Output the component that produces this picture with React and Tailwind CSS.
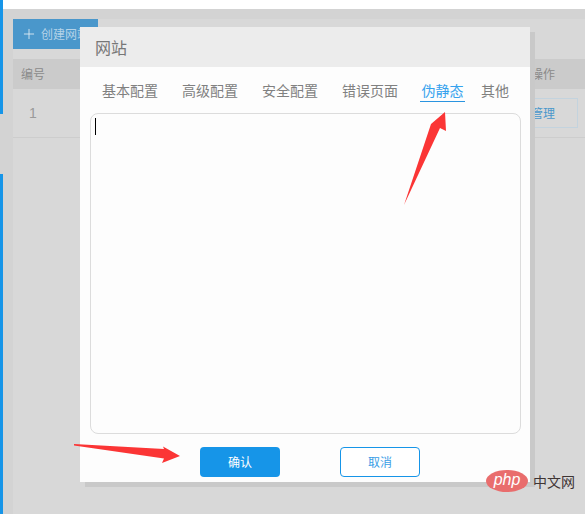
import React from 'react';
import { Plus } from 'lucide-react';

const font = "font-['Noto_Sans_CJK_SC','Liberation_Sans',sans-serif]";

const tabs = [
  { label: '基本配置', cls: 'ml-0' },
  { label: '高级配置', cls: 'ml-6' },
  { label: '安全配置', cls: 'ml-6' },
  { label: '错误页面', cls: 'ml-6' },
  { label: '伪静态', cls: 'ml-[22px] w-[45px] text-center text-[#35a2ee] border-b border-[#2a94e0]' },
  { label: '其他', cls: 'ml-4' },
];

const Arrows = () => (
  <svg className="absolute left-0 top-0 pointer-events-none" width="585" height="514" viewBox="0 0 585 514">
    <polygon points="404,205 429,130 431,124 445,112 446,131 440,128" fill="#fb3535" />
    <polygon points="74,444 164,449 163,446.5 180,456 162,463 164,458.5 74,445.5" fill="#fb3535" />
  </svg>
);

const PhpLogo = () => (
  <div className="absolute left-[486px] top-[470px] flex items-center">
    <div className="w-[42px] h-[22px] rounded-[50%] bg-[#e96d6d] flex items-center justify-center">
      <span className="text-white italic text-[16px] leading-none font-['Liberation_Sans',sans-serif] -mt-[2px]">php</span>
    </div>
    <span className="ml-[5px] text-[14px] leading-none text-[#3f3535]">中文网</span>
  </div>
);

const Modal = () => (
  <div className="absolute left-[80px] top-[27px] w-[450px] h-[455px] bg-[#fdfdfd] shadow-[5px_5px_0_#c9c9c9] flex flex-col">
    <div className="h-10 shrink-0 bg-[#ececec] pl-[15px] flex items-center text-[16px] text-[#777]">网站</div>
    <div className="flex pl-[22px] pt-[13px] h-[46px] shrink-0 text-[14px] leading-5 text-[#808080]">
      {tabs.map((tab) => (
        <div key={tab.label} className={`h-[22px] ${tab.cls}`}>{tab.label}</div>
      ))}
    </div>
    <div className="mx-[10px] w-[431px] h-[321px] shrink-0 rounded-[8px] border border-[#dcdcdc] pl-1 pt-[4px]">
      <div className="w-px h-[17px] bg-black"></div>
    </div>
    <div className="flex pl-[120px] pt-[13px] gap-[60px] text-[12px]">
      <button className="w-20 h-[30px] rounded-[4px] bg-[#1695e8] text-white">确认</button>
      <button className="w-20 h-[30px] rounded-[4px] border border-[#1695e8] bg-white text-[#3a9ee6]">取消</button>
    </div>
  </div>
);

export default function App() {
  return (
    <div className={`relative w-[585px] h-[514px] overflow-hidden bg-white flex ${font}`}>
      {/* left strip */}
      <div className="w-[3px] shrink-0 flex flex-col">
        <div className="h-[114px] bg-[#1695e8]"></div>
        <div className="h-[60px] bg-[#d3d3d3]"></div>
        <div className="flex-1 bg-[#1695e8]"></div>
      </div>

      {/* dimmed page */}
      <div className="flex-1 flex flex-col">
        <div className="h-[9px] bg-white"></div>
        <div className="flex-1 bg-[#d3d3d3] pl-[10px] pt-[10px] flex flex-col">
          <div className="flex-1 bg-[#d8d8d8] flex flex-col">
            <div className="flex justify-between h-10 shrink-0">
              <div className="w-[85px] h-[30px] bg-[#4a97cb] flex items-center pl-[8px] text-[12px] text-[#b5d3e8] whitespace-nowrap overflow-hidden">
                <Plus size={16} strokeWidth={1.25} className="text-[#e8f1f7] shrink-0" />
                <span className="ml-[4px]">创建网站</span>
              </div>
              <div className="w-[207px] h-[30px] pl-[70px] pt-[4px] text-[13px] text-[#8a8a8a]">搜索网站</div>
            </div>
            <div className="h-[30px] shrink-0 bg-[#cbcbcb] flex items-center justify-between pl-[8px] pr-[30px] text-[12px] text-[#8a8a8a]">
              <span>编号</span>
              <span>操作</span>
            </div>
            <div className="h-[49px] shrink-0 border-b border-[#cdcdcd] flex items-center justify-between pl-[16px] pr-[7px] text-[12px]">
              <span className="text-[14px] text-[#9a9a9a] font-['Liberation_Sans',sans-serif]">1</span>
              <span className="w-[57px] h-[30px] border border-[#c3d3de] flex items-center pl-[9px] text-[#4a97cb]">管理</span>
            </div>
          </div>
        </div>
      </div>

      <Modal />
      <Arrows />
      <PhpLogo />
    </div>
  );
}
